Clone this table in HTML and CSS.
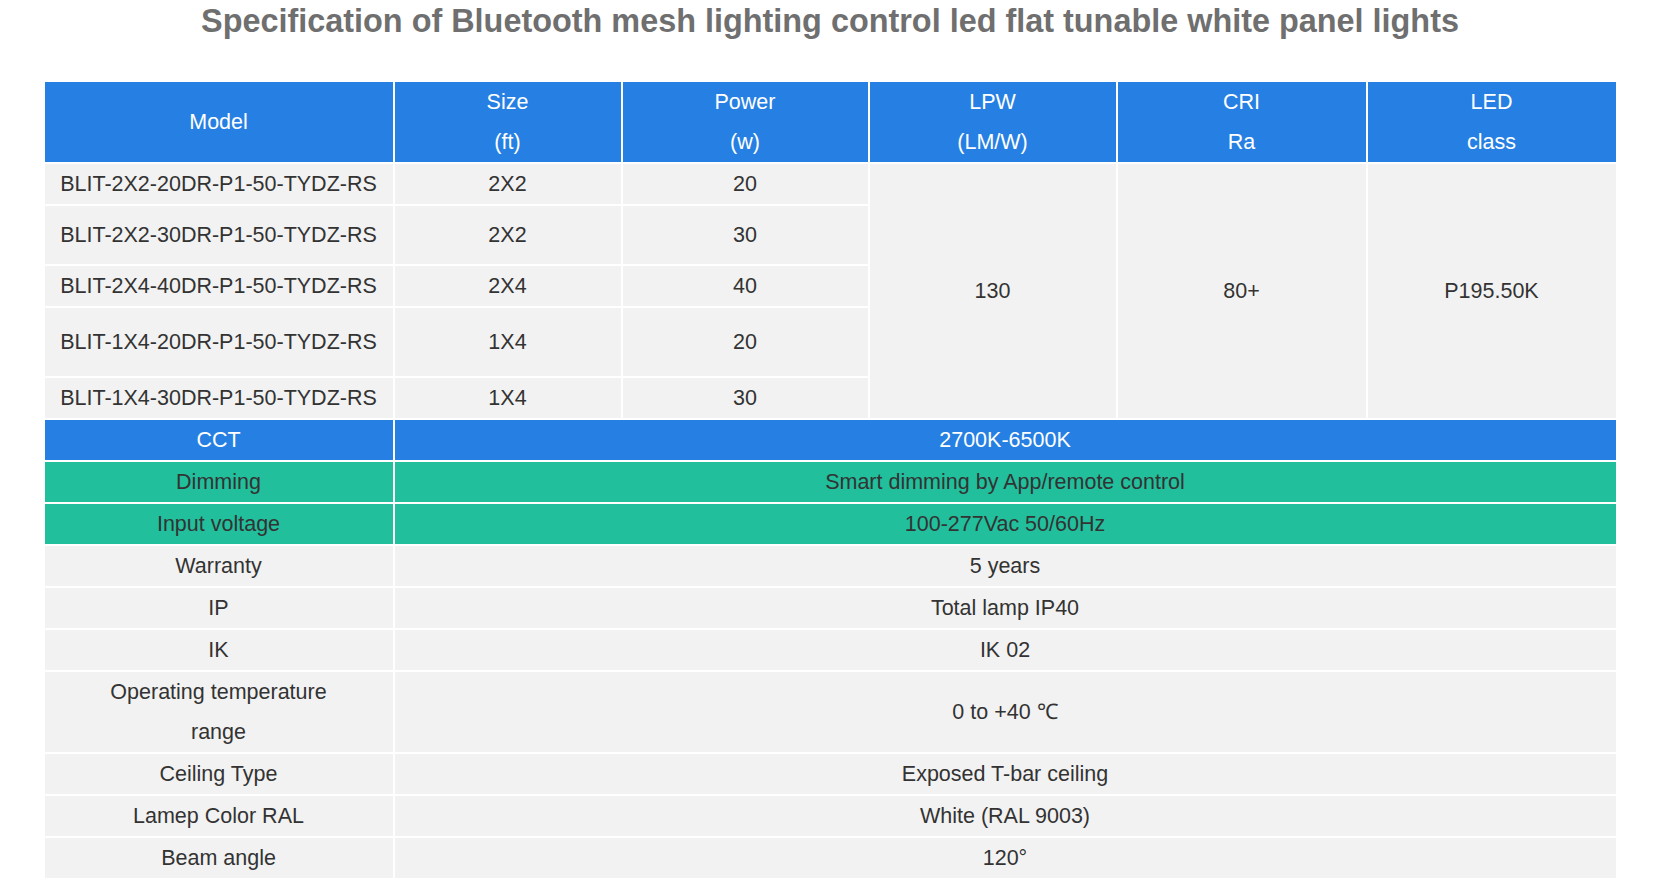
FILE: index.html
```html
<!DOCTYPE html>
<html lang="en">
<head>
<meta charset="utf-8">
<title>Specification</title>
<link rel="stylesheet" href="styles.css">
</head>
<body>
<div class="page">
  <h1 class="title">Specification of Bluetooth mesh lighting control led flat tunable white panel lights</h1>
  <table class="spec">
    <colgroup>
      <col class="c1"><col class="c2"><col class="c3"><col class="c4"><col class="c5"><col class="c6">
    </colgroup>
    <tr class="head r80">
      <td>Model</td>
      <td>Size<br>(ft)</td>
      <td>Power<br>(w)</td>
      <td>LPW<br>(LM/W)</td>
      <td>CRI<br>Ra</td>
      <td>LED<br>class</td>
    </tr>
    <tr class="r40">
      <td>BLIT-2X2-20DR-P1-50-TYDZ-RS</td>
      <td>2X2</td>
      <td>20</td>
      <td rowspan="5">130</td>
      <td rowspan="5">80+</td>
      <td rowspan="5">P195.50K</td>
    </tr>
    <tr class="r58">
      <td>BLIT-2X2-30DR-P1-50-TYDZ-RS</td>
      <td>2X2</td>
      <td>30</td>
    </tr>
    <tr class="r40">
      <td>BLIT-2X4-40DR-P1-50-TYDZ-RS</td>
      <td>2X4</td>
      <td>40</td>
    </tr>
    <tr class="r68">
      <td>BLIT-1X4-20DR-P1-50-TYDZ-RS</td>
      <td>1X4</td>
      <td>20</td>
    </tr>
    <tr class="r40">
      <td>BLIT-1X4-30DR-P1-50-TYDZ-RS</td>
      <td>1X4</td>
      <td>30</td>
    </tr>
    <tr class="blue r40">
      <td>CCT</td>
      <td colspan="5">2700K-6500K</td>
    </tr>
    <tr class="green r40">
      <td>Dimming</td>
      <td colspan="5">Smart dimming by App/remote control</td>
    </tr>
    <tr class="green r40">
      <td>Input voltage</td>
      <td colspan="5">100-277Vac 50/60Hz</td>
    </tr>
    <tr class="r40">
      <td>Warranty</td>
      <td colspan="5">5 years</td>
    </tr>
    <tr class="r40">
      <td>IP</td>
      <td colspan="5">Total lamp IP40</td>
    </tr>
    <tr class="r40">
      <td>IK</td>
      <td colspan="5">IK 02</td>
    </tr>
    <tr class="r80">
      <td>Operating temperature<br>range</td>
      <td colspan="5">0 to +40 ℃</td>
    </tr>
    <tr class="r40">
      <td>Ceiling Type</td>
      <td colspan="5">Exposed T-bar ceiling</td>
    </tr>
    <tr class="r40">
      <td>Lamep Color RAL</td>
      <td colspan="5">White (RAL 9003)</td>
    </tr>
    <tr class="r40">
      <td>Beam angle</td>
      <td colspan="5">120°</td>
    </tr>
  </table>
</div>
</body>
</html>
```

FILE: styles.css
```css
html, body {
  margin: 0;
  padding: 0;
  background: #ffffff;
}

body {
  font-family: "Liberation Sans", Arial, sans-serif;
  color: #333333;
}

.page {
  width: 1575px;
  margin: 0 auto;
}

.title {
  margin: 0 0 39px 0;
  padding-top: 1px;
  font-size: 32.4px;
  line-height: 40px;
  font-weight: bold;
  color: #6f6f6f;
  text-align: center;
  white-space: nowrap;
}

.spec {
  width: 1575px;
  table-layout: fixed;
  border-collapse: separate;
  border-spacing: 2px;
  font-size: 21.5px;
  line-height: 40px;
}

.c1 { width: 348px; }
.c2 { width: 226px; }
.c3 { width: 245px; }
.c4 { width: 246px; }
.c5 { width: 248px; }
.c6 { width: 248px; }

.spec td {
  padding: 0;
  background: #f2f2f2;
  color: #333333;
  text-align: center;
  vertical-align: middle;
  white-space: nowrap;
}

.r40 { height: 40px; }
.r58 { height: 58px; }
.r68 { height: 68px; }
.r80 { height: 80px; }

.spec .head td,
.spec .blue td {
  background: #2680e3;
  color: #ffffff;
}

.spec .green td {
  background: #21bf9c;
  color: #333333;
}
```
